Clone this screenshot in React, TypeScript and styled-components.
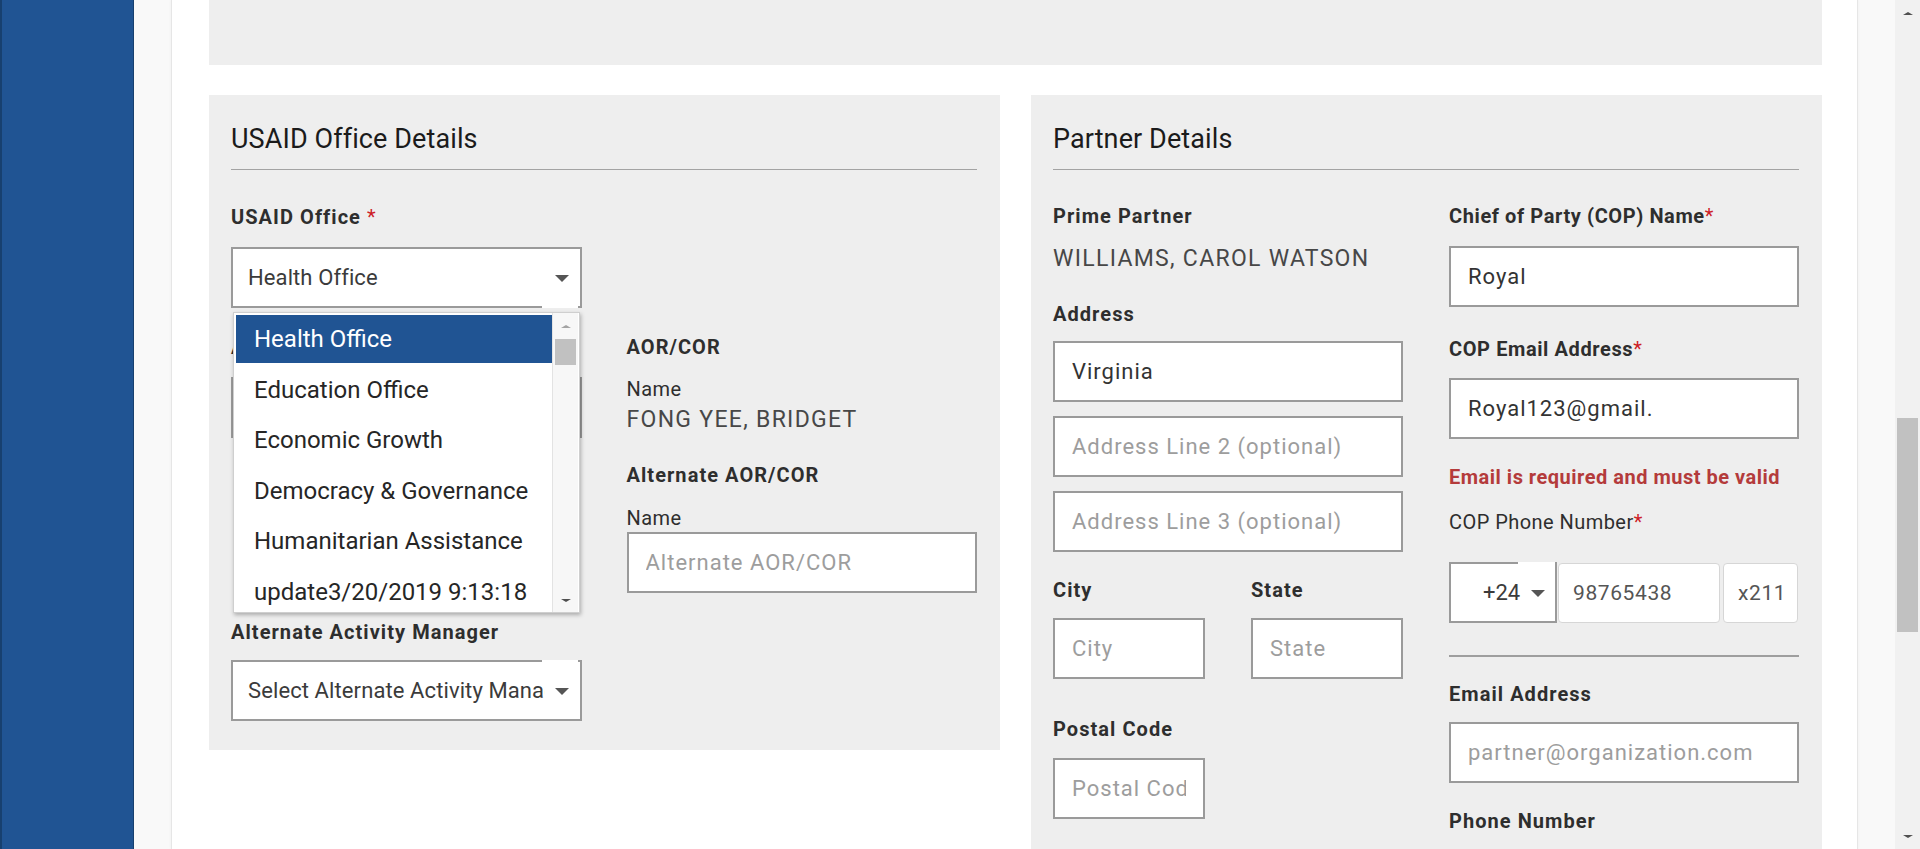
import React from 'react';
import styled, { createGlobalStyle } from 'styled-components';

const GlobalStyle = createGlobalStyle`
  html, body { margin: 0; padding: 0; height: 849px; overflow: hidden; background: #f9f9f9; }
  body { font-family: Roboto, "Noto Sans", "Liberation Sans", sans-serif; }
  *, *::before, *::after { box-sizing: border-box; }
`;

const Shell = styled.div`
  display: flex;
  width: 1920px;
  height: 849px;
  overflow: hidden;
`;

const Sidebar = styled.aside`
  flex: none;
  width: 134px;
  background: #205493;
  border-left: 2px solid #17406f;
  border-right: 1px solid #17406f;
`;

const Gutter = styled.div`
  flex: 1;
  min-width: 0;
  display: flex;
  background: #f9f9f9;
  padding: 0 37px;
`;

const Card = styled.main`
  flex: 1;
  min-width: 0;
  display: flex;
  flex-direction: column;
  background: #ffffff;
  border-left: 1px solid #e6e6e6;
  border-right: 1px solid #e6e6e6;
  box-shadow: 0 0 3px rgba(0, 0, 0, 0.05);
  padding: 0 35px 0 37px;
  overflow: hidden;
`;

const TopPanel = styled.div`
  height: 65px;
  flex: none;
  background: #eeeeee;
`;

const Sections = styled.div`
  display: grid;
  grid-template-columns: 791px 791px;
  column-gap: 31px;
  align-items: start;
  margin-top: 30px;
`;

const Panel = styled.section`
  background: #eeeeee;
  padding: 28px 23px 29px 22px;
`;

const PanelTitle = styled.h2`
  margin: 0;
  font-size: 27px;
  line-height: 32px;
  font-weight: 400;
  letter-spacing: 0.1px;
  color: #1b1b1b;
  padding-bottom: 14px;
  border-bottom: 1px solid #a3a3a3;
`;

const TwoCol = styled.div<{ $mt: number; $gap: number; $rowGap?: number }>`
  display: grid;
  grid-template-columns: 1fr 1fr;
  column-gap: ${(p) => p.$gap}px;
  row-gap: ${(p) => p.$rowGap ?? 0}px;
  align-items: start;
  margin-top: ${(p) => p.$mt}px;
`;

const Column = styled.div`
  display: flex;
  flex-direction: column;
  min-width: 0;
`;

const Field = styled.div`
  position: relative;
  display: flex;
  flex-direction: column;
  min-width: 0;
`;

const Label = styled.div<{ $mt?: number; $regular?: boolean; $tight?: boolean }>`
  margin-top: ${(p) => p.$mt ?? 0}px;
  font-size: 20px;
  line-height: 24px;
  font-weight: ${(p) => (p.$regular ? 400 : 700)};
  letter-spacing: ${(p) => (p.$regular ? 0.45 : p.$tight ? 0.6 : 1.05)}px;
  color: #2e2e2e;
  white-space: nowrap;
`;

const Req = styled.span`
  color: #cd2026;
  font-weight: 400;
  letter-spacing: 0;
`;

const Value = styled.div<{ $mt?: number }>`
  margin-top: ${(p) => p.$mt ?? 0}px;
  font-size: 23px;
  line-height: 28px;
  letter-spacing: 1.3px;
  color: #474747;
  white-space: nowrap;
`;

const ErrorText = styled.div<{ $mt?: number }>`
  margin-top: ${(p) => p.$mt ?? 0}px;
  font-size: 20px;
  line-height: 24px;
  font-weight: 700;
  letter-spacing: 0.5px;
  color: #b43b3b;
  white-space: nowrap;
`;

const TextInput = styled.input<{ $mt?: number }>`
  display: block;
  width: 100%;
  height: 61px;
  margin: ${(p) => p.$mt ?? 0}px 0 0 0;
  padding: 0 17px;
  border: 2px solid #9a9a9a;
  border-radius: 0;
  background: #ffffff;
  font-family: Roboto, "Noto Sans", sans-serif;
  font-size: 22px;
  letter-spacing: 1px;
  color: #333333;
  outline: none;
  &::placeholder {
    color: #9d9d9d;
    opacity: 1;
  }
`;

const SelectBox = styled.div<{ $mt?: number }>`
  position: relative;
  display: flex;
  align-items: center;
  height: 61px;
  margin-top: ${(p) => p.$mt ?? 0}px;
  padding: 0 35px 0 15px;
  border: 2px solid #9a9a9a;
  background: #ffffff;
  font-size: 22px;
  letter-spacing: 0.1px;
  color: #3b3b3b;
  white-space: nowrap;
`;

const SelectText = styled.span`
  overflow: hidden;
  white-space: nowrap;
`;

const Caret = styled.span<{ $right: number }>`
  position: absolute;
  right: ${(p) => p.$right}px;
  top: 50%;
  margin-top: -3px;
  width: 0;
  height: 0;
  border-left: 7px solid transparent;
  border-right: 7px solid transparent;
  border-top: 7px solid #555555;
`;

const Notch = styled.span<{ $side: 'top' | 'bottom'; $right: number; $w: number }>`
  position: absolute;
  right: ${(p) => p.$right}px;
  ${(p) => p.$side}: -2px;
  width: ${(p) => p.$w}px;
  height: 2px;
  background: #ffffff;
`;

const Dropdown = styled.div`
  position: absolute;
  z-index: 10;
  left: 2px;
  top: calc(100% + 4px);
  width: 347px;
  height: 301px;
  display: flex;
  padding: 2px 1px 0 2px;
  background: #ffffff;
  border: 1px solid #cfcfcf;
  box-shadow: 1px 2px 4px rgba(0, 0, 0, 0.28);
  overflow: hidden;
`;

const OptionList = styled.div`
  flex: 1;
  min-width: 0;
  display: flex;
  flex-direction: column;
`;

const Option = styled.div<{ $active?: boolean }>`
  flex: none;
  height: 48px;
  margin-bottom: 2.5px;
  padding-left: 18px;
  font-size: 24px;
  line-height: 48px;
  color: ${(p) => (p.$active ? '#ffffff' : '#262626')};
  background: ${(p) => (p.$active ? '#205493' : 'transparent')};
  white-space: nowrap;
`;

const ListScroll = styled.div`
  flex: none;
  width: 26px;
  display: flex;
  flex-direction: column;
  align-items: center;
  border-left: 1px solid #e3e3e3;
  background: #f7f7f7;
  margin-top: -2px;
`;

const ArrowCell = styled.div<{ $h: number }>`
  flex: none;
  height: ${(p) => p.$h}px;
  width: 100%;
  display: flex;
  align-items: center;
  justify-content: center;
`;

const TriUp = styled.span<{ $color: string; $size: number }>`
  width: 0;
  height: 0;
  border-left: ${(p) => p.$size}px solid transparent;
  border-right: ${(p) => p.$size}px solid transparent;
  border-bottom: ${(p) => Math.round(p.$size * 0.6)}px solid ${(p) => p.$color};
`;

const TriDown = styled.span<{ $color: string; $size: number }>`
  width: 0;
  height: 0;
  border-left: ${(p) => p.$size}px solid transparent;
  border-right: ${(p) => p.$size}px solid transparent;
  border-top: ${(p) => Math.round(p.$size * 0.6)}px solid ${(p) => p.$color};
`;

const ListThumb = styled.div`
  flex: none;
  width: 21px;
  height: 26px;
  background: #c1c1c1;
`;

const Filler = styled.div`
  flex: 1;
`;

const Divider = styled.hr<{ $mt: number }>`
  margin: ${(p) => p.$mt}px 0 0 0;
  border: none;
  height: 2px;
  background: #9e9e9e;
`;

const PhoneRow = styled.div<{ $mt: number }>`
  display: flex;
  align-items: center;
  margin-top: ${(p) => p.$mt}px;
  height: 61px;
`;

const CountrySelect = styled.div`
  position: relative;
  flex: none;
  width: 108px;
  height: 61px;
  display: flex;
  align-items: center;
  padding-left: 32px;
  border: 2px solid #9a9a9a;
  background: #ffffff;
  font-size: 22px;
  color: #3b3b3b;
`;

const PhoneInput = styled.input<{ $w: number; $ml: number }>`
  flex: none;
  width: ${(p) => p.$w}px;
  height: 60px;
  margin: 0 0 0 ${(p) => p.$ml}px;
  padding: 0 14px;
  border: 1px solid #d6d6d6;
  border-radius: 4px;
  background: #ffffff;
  font-family: Roboto, "Noto Sans", sans-serif;
  font-size: 21px;
  letter-spacing: 0.6px;
  color: #555555;
  outline: none;
`;

const PageScroll = styled.div`
  flex: none;
  width: 25px;
  display: flex;
  flex-direction: column;
  align-items: center;
  background: #f1f1f1;
`;

const PageThumb = styled.div<{ $top: number; $h: number }>`
  flex: none;
  margin-top: ${(p) => p.$top}px;
  width: 21px;
  height: ${(p) => p.$h}px;
  background: #c1c1c1;
`;

const offices = [
  'Health Office',
  'Education Office',
  'Economic Growth',
  'Democracy & Governance',
  'Humanitarian Assistance',
  'update3/20/2019 9:13:18',
];

function Select({
  value,
  mt,
  notch,
}: {
  value: string;
  mt?: number;
  notch?: 'top' | 'bottom';
}) {
  return (
    <SelectBox $mt={mt}>
      <SelectText>{value}</SelectText>
      <Caret $right={11} />
      {notch && <Notch $side={notch} $right={2} $w={36} />}
    </SelectBox>
  );
}

export default function App() {
  return (
    <>
      <GlobalStyle />
      <Shell>
        <Sidebar />
        <Gutter>
          <Card>
            <TopPanel />
            <Sections>
              <Panel>
                <PanelTitle>USAID Office Details</PanelTitle>
                <TwoCol $mt={35} $gap={45} $rowGap={27}>
                  <Field>
                    <Label>
                      USAID Office <Req>*</Req>
                    </Label>
                    <Select value="Health Office" mt={18} notch="bottom" />
                    <Dropdown>
                      <OptionList>
                        {offices.map((o, i) => (
                          <Option key={o} $active={i === 0}>
                            {o}
                          </Option>
                        ))}
                      </OptionList>
                      <ListScroll>
                        <ArrowCell $h={26}>
                          <TriUp $color="#a3a3a3" $size={5} />
                        </ArrowCell>
                        <ListThumb />
                        <Filler />
                        <ArrowCell $h={24}>
                          <TriDown $color="#505050" $size={5} />
                        </ArrowCell>
                      </ListScroll>
                    </Dropdown>
                  </Field>
                  <div />
                  <Field>
                    <Label>
                      Activity Manager <Req>*</Req>
                    </Label>
                    <Select value="Select Activity Manager" mt={18} notch="top" />
                  </Field>
                  <Column>
                    <Label>AOR/COR</Label>
                    <Label $regular $mt={18}>
                      Name
                    </Label>
                    <Value $mt={5}>FONG YEE, BRIDGET</Value>
                    <Label $mt={29}>Alternate AOR/COR</Label>
                    <Label $regular $mt={19}>
                      Name
                    </Label>
                    <TextInput $mt={2} placeholder="Alternate AOR/COR" />
                  </Column>
                  <Field>
                    <Label>Alternate Activity Manager</Label>
                    <Select value="Select Alternate Activity Manager" mt={16} notch="top" />
                  </Field>
                </TwoCol>
              </Panel>

              <Panel>
                <PanelTitle>Partner Details</PanelTitle>
                <TwoCol $mt={34} $gap={46}>
                  <Column>
                    <Label>Prime Partner</Label>
                    <Value $mt={17}>WILLIAMS, CAROL WATSON</Value>
                    <Label $mt={29}>Address</Label>
                    <TextInput $mt={15} defaultValue="Virginia" />
                    <TextInput $mt={14} placeholder="Address Line 2 (optional)" />
                    <TextInput $mt={14} placeholder="Address Line 3 (optional)" />
                    <TwoCol $mt={26} $gap={46}>
                      <Field>
                        <Label>City</Label>
                        <TextInput $mt={16} placeholder="City" />
                      </Field>
                      <Field>
                        <Label>State</Label>
                        <TextInput $mt={16} placeholder="State" />
                      </Field>
                    </TwoCol>
                    <TwoCol $mt={38} $gap={46}>
                      <Field>
                        <Label>Postal Code</Label>
                        <TextInput $mt={17} placeholder="Postal Code" />
                      </Field>
                    </TwoCol>
                  </Column>
                  <Column>
                    <Label $tight>
                      Chief of Party (COP) Name<Req>*</Req>
                    </Label>
                    <TextInput $mt={18} defaultValue="Royal" />
                    <Label $tight $mt={30}>
                      COP Email Address<Req>*</Req>
                    </Label>
                    <TextInput $mt={17} defaultValue="Royal123@gmail." />
                    <ErrorText $mt={26}>Email is required and must be valid</ErrorText>
                    <Label $regular $mt={21}>
                      COP Phone Number<Req>*</Req>
                    </Label>
                    <PhoneRow $mt={28}>
                      <CountrySelect>
                        +24
                        <Caret $right={10} />
                        <Notch $side="top" $right={0} $w={37} />
                      </CountrySelect>
                      <PhoneInput $w={162} $ml={1} defaultValue="98765438" />
                      <PhoneInput $w={75} $ml={3} defaultValue="x211" />
                    </PhoneRow>
                    <Divider $mt={32} />
                    <Label $mt={25}>Email Address</Label>
                    <TextInput $mt={16} placeholder="partner@organization.com" />
                    <Label $mt={26}>Phone Number</Label>
                    <PhoneRow $mt={29}>
                      <CountrySelect>
                        +1
                        <Caret $right={10} />
                      </CountrySelect>
                      <PhoneInput $w={162} $ml={1} placeholder="" />
                      <PhoneInput $w={75} $ml={3} placeholder="" />
                    </PhoneRow>
                  </Column>
                </TwoCol>
              </Panel>
            </Sections>
          </Card>
        </Gutter>
        <PageScroll>
          <ArrowCell $h={26}>
            <TriUp $color="#505050" $size={5} />
          </ArrowCell>
          <PageThumb $top={392} $h={214} />
          <Filler />
          <ArrowCell $h={26}>
            <TriDown $color="#505050" $size={5} />
          </ArrowCell>
        </PageScroll>
      </Shell>
    </>
  );
}
